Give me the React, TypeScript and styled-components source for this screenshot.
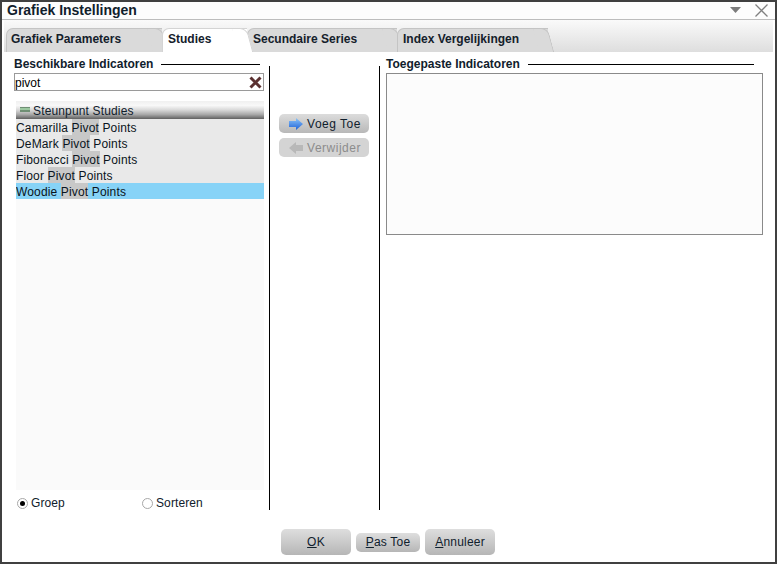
import React from 'react';
import styled, { createGlobalStyle } from 'styled-components';

const GlobalStyle = createGlobalStyle`
  html, body { margin: 0; padding: 0; background: #fff; }
  * { box-sizing: border-box; }
  body { font-family: "Liberation Sans", Arial, sans-serif; font-size: 12px; color: #000; }
`;

const Win = styled.div`
  width: 777px;
  height: 564px;
  border: 2px solid #404040;
  background: #fff;
  display: flex;
  flex-direction: column;
  overflow: hidden;
`;

const TitleBar = styled.div`
  height: 18px;
  flex: none;
  display: flex;
  align-items: center;
  justify-content: space-between;
  padding: 0 7px 1px 5px;
  background: #fdfdfd;
  border-bottom: 1px solid #bdbdbd;
`;

const Title = styled.div`
  font-weight: bold;
  font-size: 14px;
  color: #10202c;
`;

const TitleIcons = styled.div`
  display: flex;
  align-items: center;
  gap: 14px;
`;

const TabStrip = styled.div`
  height: 32px;
  flex: none;
  margin: 0 2px;
  padding: 8px 0 0 2px;
  display: flex;
  align-items: stretch;
  background: linear-gradient(#fafafa, #dedede);
`;

const Tab = styled.div<{ $active?: boolean; $w: number }>`
  position: relative;
  width: ${(p) => p.$w}px;
  flex: none;
  padding: 3px 0 0 5px;
  font-weight: bold;
  font-size: 12px;
  color: #14202a;
  border-top: 1px solid ${(p) => (p.$active ? '#d4d4d4' : '#c4c4c4')};
  border-left: 1px solid ${(p) => (p.$active ? '#d4d4d4' : '#c4c4c4')};
  border-radius: 7px 0 0 0;
  background: ${(p) => (p.$active ? '#fff' : '#dadada')};
  z-index: ${(p) => (p.$active ? 2 : 1)};
  &:first-child { padding-left: 4px; }
  &::after {
    content: '';
    position: absolute;
    top: -1px;
    right: -3px;
    width: 14px;
    bottom: 0;
    background: ${(p) => (p.$active ? '#fff' : '#dadada')};
    border-top: 1px solid ${(p) => (p.$active ? '#d4d4d4' : '#c4c4c4')};
    border-right: 1px solid ${(p) => (p.$active ? '#d4d4d4' : '#c4c4c4')};
    border-radius: 0 7px 0 0;
    transform: skewX(15deg);
    z-index: -1;
  }
`;

const Main = styled.div`
  flex: 1;
  display: flex;
  min-height: 0;
`;

const LeftCol = styled.div`
  width: 267px;
  flex: none;
  padding: 5px 5px 0 12px;
  display: flex;
  flex-direction: column;
`;

const Divider = styled.div`
  width: 1px;
  flex: none;
  margin: 14px 0 6px;
  background: #000;
`;

const MiddleCol = styled.div`
  width: 109px;
  flex: none;
  padding: 62px 10px 0 9px;
  display: flex;
  flex-direction: column;
  gap: 5px;
`;

const RightCol = styled.div`
  flex: 1;
  padding: 5px 12px 0 6px;
  display: flex;
  flex-direction: column;
`;

const HeadingRow = styled.div<{ $trim: number }>`
  height: 14px;
  flex: none;
  display: flex;
  align-items: center;
  gap: 8px;
  margin-right: ${(p) => p.$trim}px;
`;

const Heading = styled.div`
  font-weight: bold;
  font-size: 12px;
  color: #10202c;
  white-space: nowrap;
`;

const Rule = styled.div`
  flex: 1;
  height: 1px;
  background: #000;
`;

const SearchBox = styled.div`
  height: 18px;
  flex: none;
  margin-top: 2px;
  border: 1px solid #9a9a9a;
  background: #fff;
  display: flex;
  align-items: center;
  justify-content: space-between;
  padding: 0 1px 0 0;
  font-size: 12px;
`;

const SearchText = styled.span`
  padding-top: 2px;
`;

const List = styled.div`
  flex: 1;
  margin: 10px 0 0 2px;
  background: #fafafa;
  letter-spacing: 0.15px;
`;

const GroupHeader = styled.div`
  height: 18px;
  display: flex;
  gap: 3px;
  line-height: 16px;
  padding: 2px 0 0 4px;
  font-size: 12px;
  color: #10202c;
  background: linear-gradient(#f0f0f0 0, #f8f8f8 25%, #d8d8d8 50%, #a8a8a8 75%, #606060 100%);
  svg { margin-top: 4px; flex: none; }
`;

const Row = styled.div<{ $selected?: boolean }>`
  height: 16px;
  line-height: 18px;
  font-size: 12px;
  color: #0a1420;
  white-space: pre;
  overflow: hidden;
  background: ${(p) => (p.$selected ? '#87d3f7' : '#e9e9e9')};
`;

const Match = styled.span`
  display: inline-block;
  height: 16px;
  vertical-align: top;
  background: #c8c8c8;
`;

const RadioRow = styled.div`
  height: 26px;
  flex: none;
  display: flex;
  align-items: center;
  padding-left: 3px;
`;

const RadioLabel = styled.label<{ $w?: number }>`
  display: flex;
  align-items: center;
  gap: 3px;
  width: ${(p) => (p.$w ? `${p.$w}px` : 'auto')};
  font-size: 12px;
  letter-spacing: 0.1px;
  color: #10202c;
`;

const RadioDot = styled.span<{ $on?: boolean }>`
  width: 11px;
  height: 11px;
  border-radius: 50%;
  border: 1px solid #a8a8a8;
  background: #fff;
  display: flex;
  align-items: center;
  justify-content: center;
  &::after {
    content: '';
    width: 5px;
    height: 5px;
    border-radius: 50%;
    background: ${(p) => (p.$on ? '#000' : 'transparent')};
  }
`;

const SideButton = styled.div<{ $disabled?: boolean }>`
  height: 19px;
  flex: none;
  border-radius: 5px;
  display: flex;
  align-items: center;
  justify-content: center;
  gap: 4px;
  padding-left: 2px;
  font-size: 12px;
  letter-spacing: 0.5px;
  color: ${(p) => (p.$disabled ? '#8c8c8c' : '#10202c')};
  background: ${(p) => (p.$disabled ? '#d4d4d4' : 'linear-gradient(#dcdcdc, #b8b8b8)')};
`;

const AppliedBox = styled.div`
  height: 162px;
  flex: none;
  margin-top: 2px;
  border: 1px solid #8a8a8a;
  background: #fcfcfc;
`;

const Footer = styled.div`
  height: 46px;
  flex: none;
  display: flex;
  align-items: center;
  justify-content: center;
  gap: 5px;
  padding: 6px 2px 0 0;
`;

const DialogButton = styled.div<{ $w: number; $h: number }>`
  width: ${(p) => p.$w}px;
  height: ${(p) => p.$h}px;
  border-radius: 5px;
  display: flex;
  align-items: center;
  justify-content: center;
  padding-left: 1px;
  font-size: 12px;
  letter-spacing: 0.2px;
  color: #10202c;
  background: linear-gradient(#dedede, #b6b6b6);
  u { text-decoration: underline; }
`;

const rows = [
  ['Camarilla ', ' Points'],
  ['DeMark ', ' Points'],
  ['Fibonacci ', ' Points'],
  ['Floor ', ' Points'],
  ['Woodie ', ' Points'],
];

export default function App() {
  return (
    <>
      <GlobalStyle />
      <Win>
        <TitleBar>
          <Title>Grafiek Instellingen</Title>
          <TitleIcons>
            <svg width="11" height="6" viewBox="0 0 11 6">
              <path d="M0 0h11L5.5 6z" fill="#7c7c7c" />
            </svg>
            <svg width="13" height="13" viewBox="0 0 13 13">
              <path d="M.5.5l12 12M12.5.5l-12 12" stroke="#808080" strokeWidth="1.3" fill="none" />
            </svg>
          </TitleIcons>
        </TitleBar>
        <TabStrip>
          <Tab $w={156}>Grafiek Parameters</Tab>
          <Tab $w={85} $active>Studies</Tab>
          <Tab $w={150}>Secundaire Series</Tab>
          <Tab $w={151}>Index Vergelijkingen</Tab>
        </TabStrip>
        <Main>
          <LeftCol>
            <HeadingRow $trim={4}>
              <Heading>Beschikbare Indicatoren</Heading>
              <Rule />
            </HeadingRow>
            <SearchBox>
              <SearchText>pivot</SearchText>
              <svg width="13" height="13" viewBox="0 0 13 13">
                <path d="M1.5 1.5l10 10M11.5 1.5l-10 10" stroke="#5a3030" strokeWidth="3" fill="none" />
              </svg>
            </SearchBox>
            <List>
              <GroupHeader>
                <svg width="10" height="5" viewBox="0 0 10 5">
                  <rect width="10" height="5" fill="#6f8f74" />
                  <rect y="1" width="10" height="2" fill="#9cc8a0" />
                </svg>
                Steunpunt Studies
              </GroupHeader>
              {rows.map(([a, b], i) => (
                <Row key={a} $selected={i === 4}>
                  {a}
                  <Match>Pivot</Match>
                  {b}
                </Row>
              ))}
            </List>
            <RadioRow>
              <RadioLabel $w={125}>
                <RadioDot $on />
                Groep
              </RadioLabel>
              <RadioLabel>
                <RadioDot />
                Sorteren
              </RadioLabel>
            </RadioRow>
          </LeftCol>
          <Divider />
          <MiddleCol>
            <SideButton>
              <svg width="14" height="12" viewBox="0 0 14 12">
                <defs>
                  <linearGradient id="arrowBlue" x1="0" y1="0" x2="0" y2="1">
                    <stop offset="0" stopColor="#8cc4f8" />
                    <stop offset="1" stopColor="#1f62d8" />
                  </linearGradient>
                </defs>
                <path d="M0 3h7V0l7 6-7 6V9H0z" fill="url(#arrowBlue)" />
              </svg>
              Voeg Toe
            </SideButton>
            <SideButton $disabled>
              <svg width="14" height="12" viewBox="0 0 14 12">
                <path d="M14 3H7V0L0 6l7 6V9h7z" fill="#b8b8b8" />
              </svg>
              Verwijder
            </SideButton>
          </MiddleCol>
          <Divider />
          <RightCol>
            <HeadingRow $trim={9}>
              <Heading>Toegepaste Indicatoren</Heading>
              <Rule />
            </HeadingRow>
            <AppliedBox />
          </RightCol>
        </Main>
        <Footer>
          <DialogButton $w={70} $h={26}><span><u>O</u>K</span></DialogButton>
          <DialogButton $w={64} $h={19}><span><u>P</u>as Toe</span></DialogButton>
          <DialogButton $w={70} $h={26}><span><u>A</u>nnuleer</span></DialogButton>
        </Footer>
      </Win>
    </>
  );
}
